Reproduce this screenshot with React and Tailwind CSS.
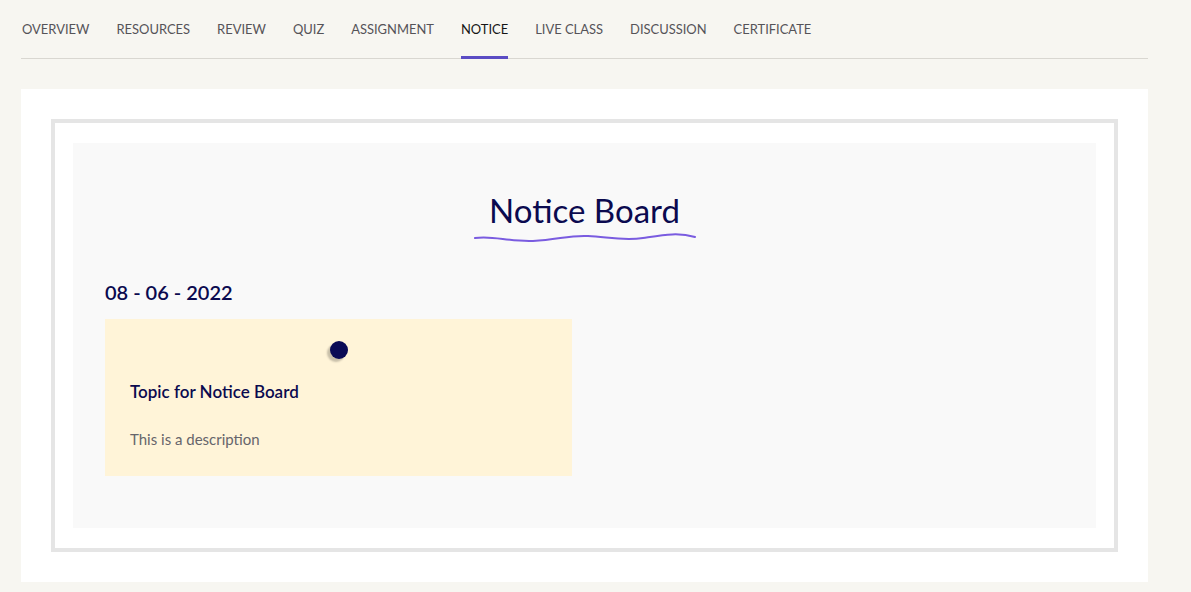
import React from "react";

const tabs = ["OVERVIEW","RESOURCES","REVIEW","QUIZ","ASSIGNMENT","NOTICE","LIVE CLASS","DISCUSSION","CERTIFICATE"];

export default function App() {
  return (
    <div className="min-h-[592px] w-full bg-[#f7f6f1] pl-[21px] pb-[11px]" style={{fontFamily: "Lato, 'Noto Sans', sans-serif"}}>
      <div className="w-[1127px]">
        <nav className="flex gap-[27px] border-b border-[#d9d7d1] pt-[21px] pl-px">
          {tabs.map((t) => (
            <div
              key={t}
              className={
                "-mb-px border-b-[3px] pb-[19px] text-[12.95px] leading-[16px] " +
                (t === "NOTICE" ? "border-[#5b4cc4] text-[#151515]" : "border-transparent text-[#555358]")
              }
            >
              {t}
            </div>
          ))}
        </nav>
        <div className="mt-[30px] bg-white p-[30px]">
          <div className="border-4 border-[#e5e5e5] px-[18px] pt-[20px] pb-[20px]">
            <div className="bg-[#f9f9f9] px-[32px] pt-[47px] pb-[52px]">
              <div className="flex flex-col items-center">
                <h1 className="text-[33px] leading-[40px] text-[#0b0a4f]">Notice Board</h1>
                <svg width="224" height="14" viewBox="0 0 224 14" className="mt-[1px]" fill="none">
                  <path d="M2 7 C 20 4, 35 11, 60 10 S 95 4, 115 5 S 150 10, 170 7 S 205 1, 222 6" stroke="#7a5ce0" strokeWidth="2" strokeLinecap="round" />
                </svg>
              </div>
              <div className="mt-[35px] text-[20px] leading-[24px] font-semibold text-[#0b0a4f]">08 - 06 - 2022</div>
              <div className="mt-[15px] w-[467px] bg-[#fff4d8] px-[25px] pt-[22px] pb-[27px]">
                <div className="flex justify-center">
                  <div className="h-[18px] w-[18px] rounded-full bg-[#0a0a55] shadow-[-3px_3px_2px_rgba(0,0,0,0.22)]" />
                </div>
                <div className="mt-[22px] text-[17px] leading-[22px] font-semibold text-[#0b0a4f]">Topic for Notice Board</div>
                <div className="mt-[26px] text-[15px] leading-[20px] text-[#66656b]">This is a description</div>
              </div>
            </div>
          </div>
        </div>
      </div>
    </div>
  );
}
